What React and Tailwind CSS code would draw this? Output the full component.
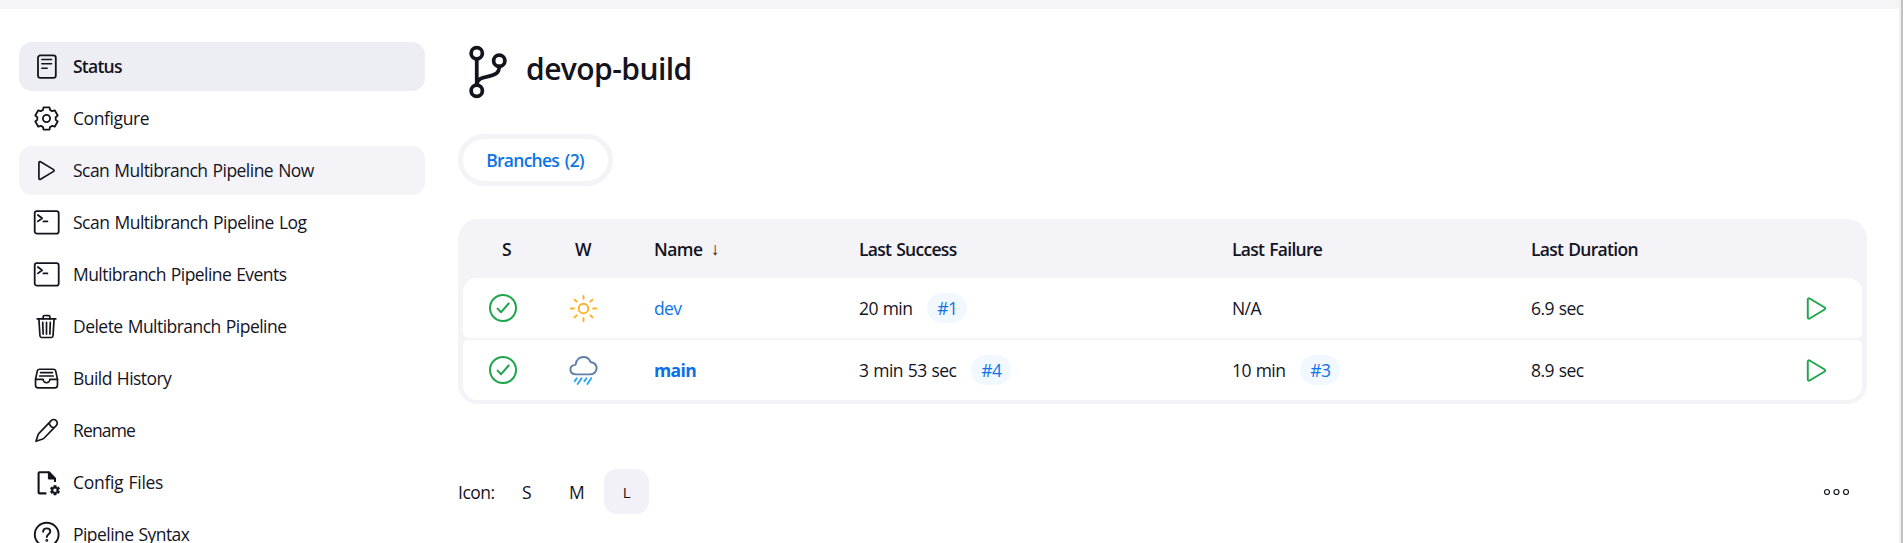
import { IoPlayOutline, IoTrashOutline, IoFileTrayFullOutline, IoGitBranchOutline, IoSunnyOutline } from 'react-icons/io5';

function Svg({ children, w = 1.8 }) {
  return (
    <svg className="size-[27px]" viewBox="0 0 27 27" fill="none" stroke="currentColor" strokeWidth={w} strokeLinecap="round" strokeLinejoin="round">
      {children}
    </svg>
  );
}

function gearPath(cx, cy, outer, inner, tip, base) {
  const pts = [];
  for (let k = 0; k < 6; k++) {
    const a = -90 + k * 60;
    [[a - base, inner], [a - tip, outer], [a + tip, outer], [a + base, inner]].forEach(([d, r]) => {
      const t = (d * Math.PI) / 180;
      pts.push(`${(cx + r * Math.cos(t)).toFixed(2)} ${(cy + r * Math.sin(t)).toFixed(2)}`);
    });
  }
  return `M${pts.join('L')}Z`;
}

const StatusIcon = () => (
  <Svg>
    <rect x="5" y="2.4" width="17.8" height="22.4" rx="2.4" />
    <path d="M8.8 6.6h9.8M8.8 10.8h9.8M8.8 15.2h5.4" strokeWidth="1.5" />
  </Svg>
);
const GearIcon = () => (
  <Svg>
    <path d={gearPath(13.5, 13.5, 11.6, 9.3, 15, 22)} />
    <circle cx="13.5" cy="13.5" r="3.6" />
  </Svg>
);
const PlayIcon = () => <IoPlayOutline className="size-[27px]" />;
const TerminalIcon = () => (
  <Svg>
    <rect x="1.7" y="2.2" width="24" height="22.4" rx="2.2" />
    <path d="M4.9 6l4.2 3.2-4.2 3.2M10.4 12.4h4" />
  </Svg>
);
const TrashIcon = () => <IoTrashOutline className="size-[27px]" />;
const TrayIcon = () => <IoFileTrayFullOutline className="size-[27px]" />;
const PencilIcon = () => (
  <Svg w={1.7}>
    <path d="M3 24.3L4.9 18.2Q5.3 17 6.2 16.1L18.2 3.7a3.5 3.5 0 0 1 5 5L11.2 21Q10.2 22 9 22.3ZM16.4 6.4a5.5 5.5 0 0 0 4.6 4.4" />
  </Svg>
);
const ConfigFileIcon = () => (
  <Svg>
    <path d="M13.4 24.4H6.6a1 1 0 0 1-1-1V4.3a1 1 0 0 1 1-1H16L22 9.4V13" strokeWidth="2.1" strokeLinecap="butt" />
    <path d="M15.4 3.2V10H22Z" fill="currentColor" strokeWidth="1" />
    <path d={gearPath(22, 21.2, 4.9, 3.6, 14, 20) + 'M24 21.2a2 2 0 1 0-4 0a2 2 0 1 0 4 0Z'} fill="currentColor" fillRule="evenodd" strokeWidth="0.6" />
  </Svg>
);
const HelpIcon = () => (
  <Svg w={1.9}>
    <circle cx="13.7" cy="13.6" r="11.9" />
    <path d="M10.1 10.7c.1-2.1 1.6-3.3 3.6-3.3s3.6 1.2 3.6 3.1c0 2.7-3.5 2.8-3.5 5.5" />
    <circle cx="13.8" cy="19.4" r="0.5" fill="currentColor" />
  </Svg>
);

const tasks = [
  ['Status', StatusIcon, 'bg-[#edeef3] font-semibold tracking-[-0.75px]'],
  ['Configure', GearIcon, 'tracking-[-0.4px]'],
  ['Scan Multibranch Pipeline Now', PlayIcon, 'bg-[#f3f3f8] tracking-[-0.53px]'],
  ['Scan Multibranch Pipeline Log', TerminalIcon, 'tracking-[-0.5px]'],
  ['Multibranch Pipeline Events', TerminalIcon, 'tracking-[-0.56px]'],
  ['Delete Multibranch Pipeline', TrashIcon, 'tracking-[-0.53px]'],
  ['Build History', TrayIcon, 'tracking-[-0.55px]'],
  ['Rename', PencilIcon, 'tracking-[-0.85px]'],
  ['Config Files', ConfigFileIcon, 'tracking-[-0.3px]'],
  ['Pipeline Syntax', HelpIcon, 'tracking-[-0.55px]'],
];

const CheckIcon = () => (
  <svg className="size-[30px] text-[#1ea64b]" viewBox="0 0 30 30" fill="none" stroke="currentColor" strokeWidth="2" strokeLinecap="round" strokeLinejoin="round">
    <circle cx="15" cy="15" r="13" />
    <path d="M9.6 15.6l3.5 3.6 7.6-8.7" />
  </svg>
);
const RainIcon = () => (
  <svg className="size-[31px]" viewBox="0 0 512 512" fill="none" strokeWidth="32" strokeLinecap="round" strokeLinejoin="round">
    <path stroke="#5f7fa8" d="M114.61 162.85A16.07 16.07 0 00128 149.6C140.09 76.17 193.17 32 256 32c57.93 0 96.62 37.75 112.2 77.74a15.84 15.84 0 0012.2 9.87c50 8.15 91.6 41.54 91.6 99.59 0 59.4-48.6 100.8-108 100.8H130c-49.5 0-90-24.7-90-79.2 0-48.47 38.67-72.22 74.61-77.95z" />
    <path stroke="#2aa9ea" d="M144 384l-32 48M224 384l-64 96M304 384l-32 48M384 384l-64 96" />
  </svg>
);

const Build = ({ time, id }) => (
  <div className="flex items-center gap-[15px]">
    <span>{time}</span>
    {id && <a className="flex h-[30px] w-10 items-center justify-center rounded-full bg-[#f2f8ff] text-[#0f74e8]">{id}</a>}
  </div>
);

const cols = 'grid grid-cols-[79px_112px_205px_373px_299px_1fr_46px] items-center';

function Row({ weather, name, success, failure, duration, className }) {
  return (
    <div className={`${cols} h-[60px] bg-white tracking-[-0.6px] ${className}`}>
      <div className="flex justify-center pl-px"><CheckIcon /></div>
      <div className="flex pl-[25.5px]">{weather}</div>
      {name}
      <Build {...success} />
      <Build {...failure} />
      <div>{duration}</div>
      <div className="-ml-[15.5px] text-[#1ea64b]"><IoPlayOutline className="size-[31px]" /></div>
    </div>
  );
}

export default function App() {
  return (
    <div className="flex h-[543px] overflow-hidden bg-white font-['Open_Sans',sans-serif] text-[17.5px] leading-6 text-[#14141f] [word-spacing:1px]">
      <div className="flex min-w-0 flex-1 flex-col">
        <div className="h-[9px] shrink-0 bg-[#f5f5f8]" />
        <div className="flex flex-1 pt-[33px] pr-8 pl-[19px]">
          <nav className="flex w-[406px] shrink-0 flex-col gap-[3px]">
            {tasks.map(([label, Icon, cls]) => (
              <a key={label} className={`flex h-[49px] shrink-0 items-center gap-[13px] rounded-[13px] pl-[14px] whitespace-nowrap ${cls}`}>
                <Icon />
                <span className="pb-px">{label}</span>
              </a>
            ))}
          </nav>
          <main className="ml-[33px] flex min-w-0 flex-1 flex-col">
            <div className="flex h-[60px] items-center gap-2">
              <IoGitBranchOutline className="size-[60px]" />
              <h1 className="pb-[7px] text-[30px] leading-10 font-semibold tracking-[-0.55px]">devop-build</h1>
            </div>
            <div className="mt-8 flex h-[52px] w-[155px] items-center justify-center rounded-full border-5 border-[#f3f3f8] pr-px font-semibold tracking-[-0.75px] text-[#0b74e5] [word-spacing:2px]">
              Branches (2)
            </div>
            <div className="mt-[33px] rounded-[20px] bg-[#f3f3f8] px-[5px] pb-1">
              <div className={`${cols} h-[59px] font-semibold tracking-[-0.7px]`}>
                <div className="pl-2 text-center">S</div>
                <div className="pl-[33px]">W</div>
                <div className="flex gap-2"><span className="tracking-[-0.5px]">Name</span><span className="font-['Liberation_Sans',sans-serif] font-normal">↓</span></div>
                <div>Last Success</div>
                <div>Last Failure</div>
                <div>Last Duration</div>
              </div>
              <div className="flex flex-col gap-0.5">
                <Row
                  className="rounded-t-[14px] rounded-b-[5px]"
                  weather={<IoSunnyOutline className="size-[31px] text-[#ffb01f]" />}
                  name={<a className="text-[#0f74e8]">dev</a>}
                  success={{ time: '20 min', id: '#1' }}
                  failure={{ time: 'N/A' }}
                  duration="6.9 sec"
                />
                <Row
                  className="rounded-t-[5px] rounded-b-[14px]"
                  weather={<RainIcon />}
                  name={<a className="font-bold text-[#0b6fe5]">main</a>}
                  success={{ time: '3 min 53 sec', id: '#4' }}
                  failure={{ time: '10 min', id: '#3' }}
                  duration="8.9 sec"
                />
              </div>
            </div>
            <div className="mt-[65px] flex h-[45px] items-center gap-[5px] tracking-[-0.5px]">
              <span className="w-[41px]">Icon:</span>
              <a className="flex size-[45px] items-center justify-center">S</a>
              <a className="flex size-[45px] items-center justify-center">M</a>
              <a className="flex size-[45px] items-center justify-center rounded-[13px] bg-[#f2f1f8] text-[15px]">L</a>
              <svg className="mr-[17px] ml-auto h-2 w-[27px]" viewBox="0 0 27 8" fill="none" stroke="currentColor" strokeWidth="1.2">
                <circle cx="4" cy="4" r="2.5" />
                <circle cx="13.5" cy="4" r="2.5" />
                <circle cx="23" cy="4" r="2.5" />
              </svg>
            </div>
          </main>
        </div>
      </div>
      <div className="w-1 border-r-2 border-l-2 border-r-[#c1c1c1] border-l-[#f1f1f1]" />
    </div>
  );
}
